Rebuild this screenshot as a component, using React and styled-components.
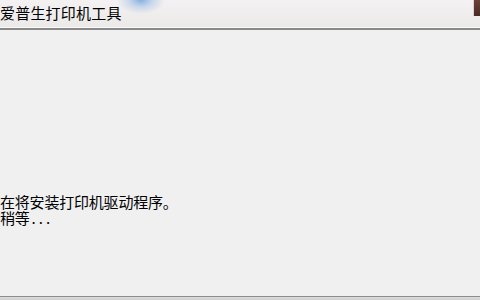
import React from 'react';
import styled, { createGlobalStyle } from 'styled-components';

const Global = createGlobalStyle`
  html, body {
    margin: 0;
    padding: 0;
    background: #f0f0f0;
    overflow: hidden;
  }
`;

const Window = styled.div`
  display: flex;
  flex-direction: column;
  width: 480px;
  height: 300px;
  font-family: "Noto Sans CJK SC", "Liberation Sans", sans-serif;
  color: #000;
`;

const TitleBar = styled.div`
  display: flex;
  align-items: flex-start;
  height: 27px;
  border-bottom: 1px solid #fbfbfb;
  box-shadow: 0 2px 0 #8a8a8a;
  background:
    radial-gradient(ellipse 24px 14px at 141px 0px, rgba(95, 155, 220, 0.75) 0, rgba(140, 180, 228, 0.4) 50%, rgba(220, 228, 240, 0) 100%),
    linear-gradient(#f3f1f1, #ece9e9);
  position: relative;
  z-index: 1;
`;

const Title = styled.div`
  font-size: 15px;
  line-height: 15px;
  padding-top: 5px;
  letter-spacing: 0.2px;
`;

const CloseEdge = styled.div`
  margin-left: auto;
  width: 6px;
  height: 16px;
  border-left: 1px solid #d8d4d2;
  background: linear-gradient(#6b4038, #4a2a24);
`;

const Client = styled.div`
  flex: 1;
  margin-top: 2px;
  padding-top: 164px;
  background: #f0f0f0;
  border-bottom: 1px solid #8c8c8c;
`;

const Message = styled.div`
  font-size: 15px;
  line-height: 16px;
  letter-spacing: -0.2px;
`;

const Dots = styled.span`
  letter-spacing: 3px;
  margin-left: 2px;
`;

const Footer = styled.div`
  height: 3px;
  background: linear-gradient(#dcdcdc, #cfcfcf);
`;

export default function App() {
  return (
    <>
      <Global />
      <Window>
        <TitleBar>
          <Title>爱普生打印机工具</Title>
          <CloseEdge />
        </TitleBar>
        <Client>
          <Message>在将安装打印机驱动程序。</Message>
          <Message>
            稍等<Dots>...</Dots>
          </Message>
        </Client>
        <Footer />
      </Window>
    </>
  );
}
